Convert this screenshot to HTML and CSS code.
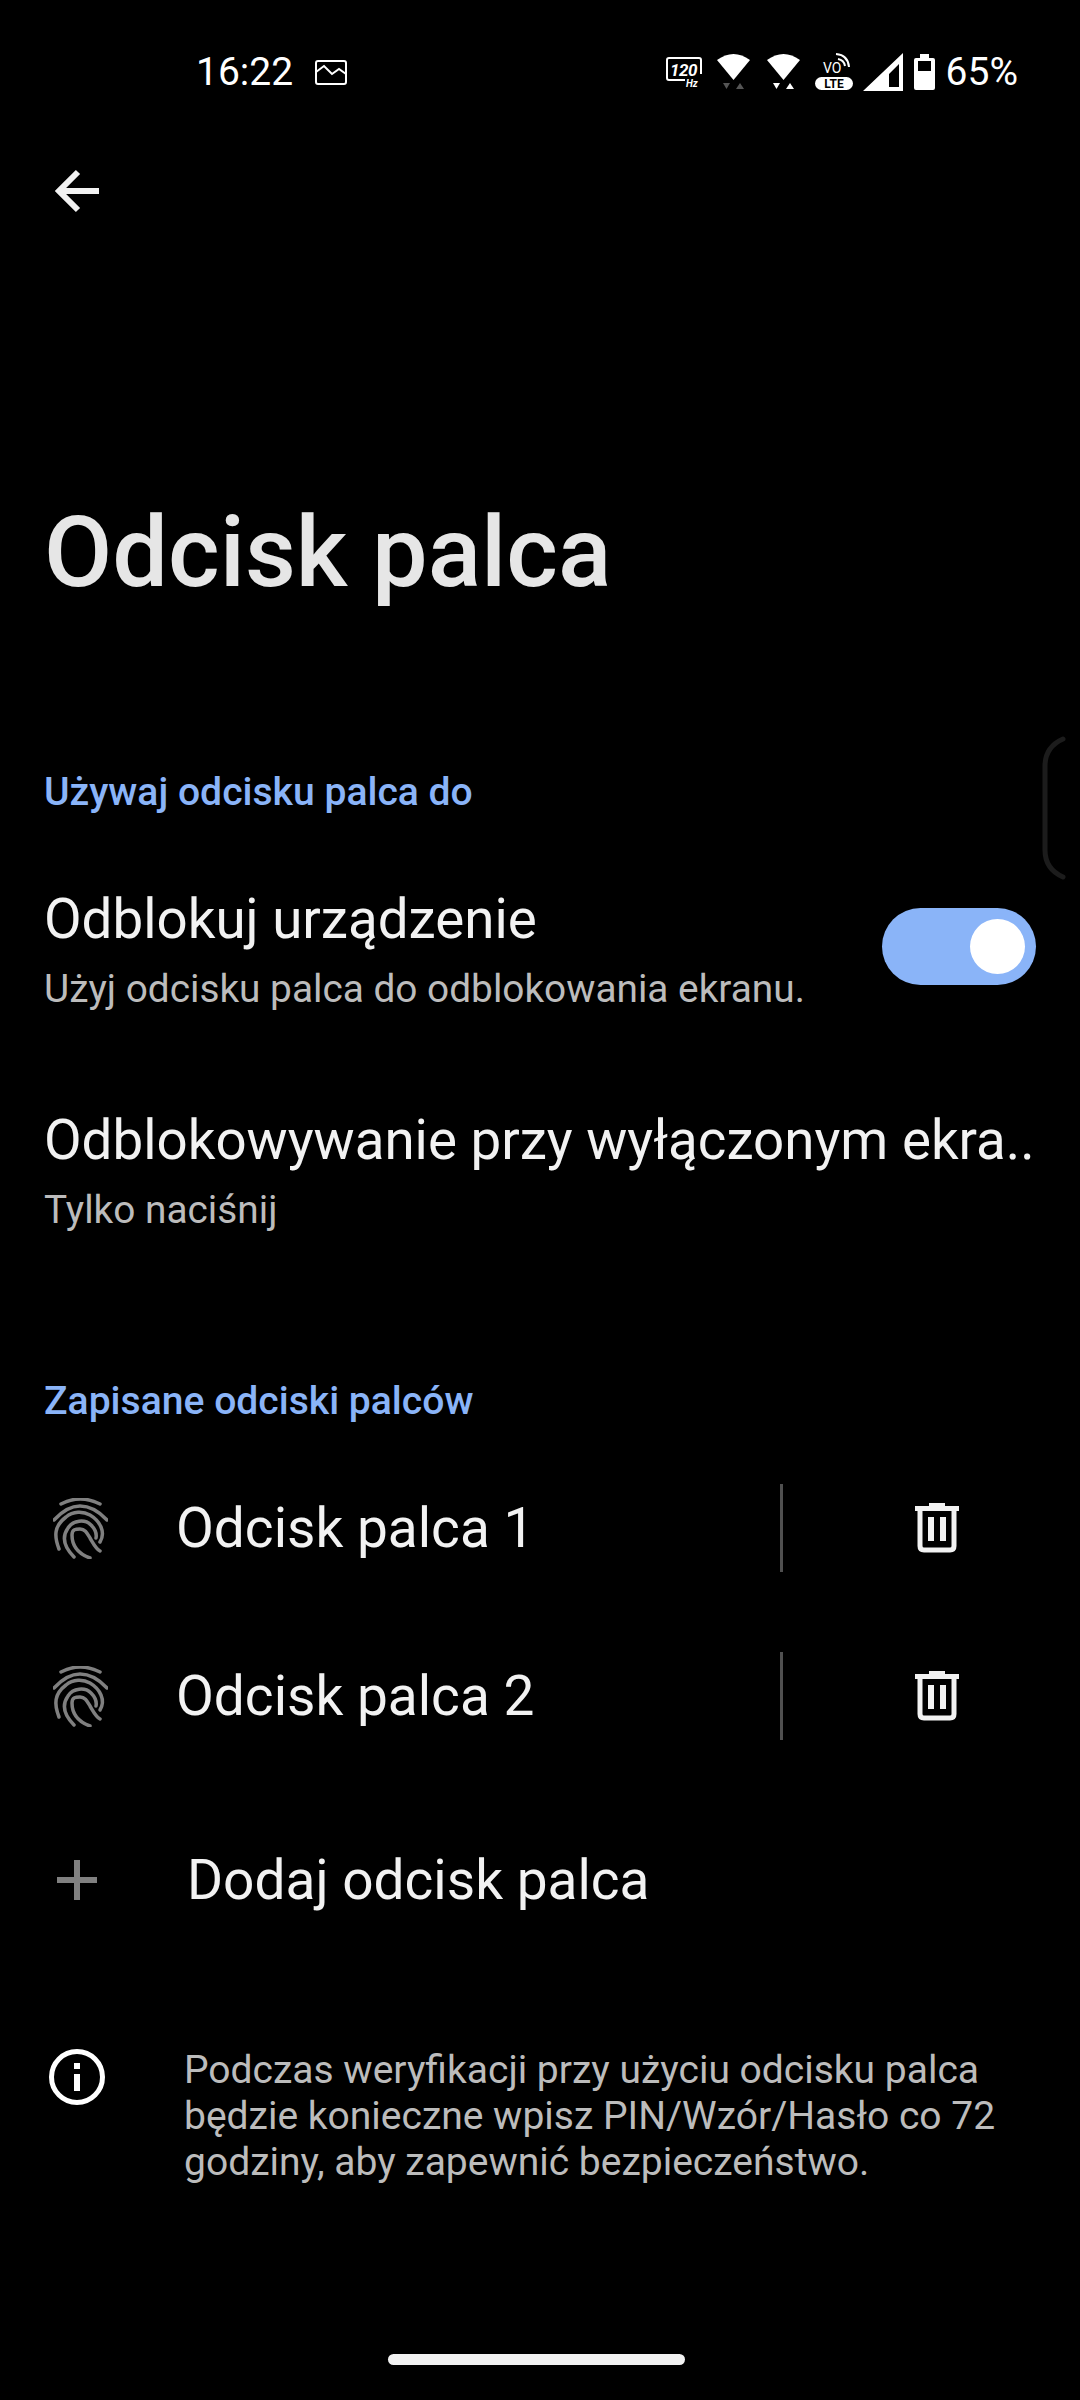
FILE: index.html
```html
<!DOCTYPE html>
<html lang="pl">
<head>
    <meta charset="UTF-8">
    <meta name="viewport" content="width=device-width, initial-scale=1.0">
    <title>Odcisk palca</title>
    <link rel="stylesheet" href="styles.css">
</head>
<body>
    <div class="screen">
        <div class="status-bar">
            <div class="status-left">
                <span class="clock">16:22</span>
                <svg class="ic-gallery" width="32" height="25" viewBox="0 0 32 25" fill="none" stroke="#fff" stroke-width="2">
                    <rect x="1" y="1" width="30" height="23" rx="2"/>
                    <path d="M1 12 L9 6 L17 14 L24 9 L31 14"/>
                </svg>
            </div>
            <div class="status-right">
                <svg class="ic-hz" width="36" height="34" viewBox="0 0 36 34" fill="none" stroke="#fff">
                    <path d="M35 17 V3 Q35 1 33 1 H3 Q1 1 1 3 V21 Q1 23 3 23 H19" stroke-width="2"/>
                    <text x="4" y="19" class="hz-num" fill="#fff" stroke="none">120</text>
                    <text x="20" y="30" class="hz-unit" fill="#fff" stroke="none">Hz</text>
                </svg>
                <svg class="ic-wifi" width="33" height="36" viewBox="0 0 33 36">
                    <path d="M0 6 Q16.500 -6 33 6 L16.500 26 Z" fill="#fff"/>
                    <path d="M6 29 H13 L9.500 35 Z" fill="#555"/>
                    <path d="M19 35 H27 L23 29 Z" fill="#555"/>
                </svg>
                <svg class="ic-wifi second" width="33" height="36" viewBox="0 0 33 36">
                    <path d="M0 6 Q16.500 -6 33 6 L16.500 26 Z" fill="#fff"/>
                    <path d="M6 29 H13 L9.500 35 Z" fill="#fff"/>
                    <path d="M19 35 H27 L23 29 Z" fill="#fff"/>
                </svg>
                <svg class="ic-volte" width="38" height="38" viewBox="0 0 38 38" fill="none" stroke="#fff">
                    <text x="8" y="20" class="vo-text" fill="#fff" stroke="none">VO</text>
                    <path d="M23 6 Q29 7 30 13 M21 1 Q33 2 34 14" stroke-width="2"/>
                    <rect x="0" y="24" width="38" height="13" rx="6.500" fill="#fff" stroke="none"/>
                    <text x="19" y="35" class="lte-text" fill="#000" stroke="none" text-anchor="middle">LTE</text>
                </svg>
                <svg class="ic-signal" width="40" height="38" viewBox="0 0 40 38">
                    <path d="M0 38 L40 0 V38 Z M26 34 H36 V11 L26 21 Z" fill="#fff" fill-rule="evenodd"/>
                </svg>
                <svg class="ic-battery" width="21" height="36" viewBox="0 0 21 36">
                    <path d="M6 0 H15 V4 H19 Q21 4 21 6 V34 Q21 36 19 36 H2 Q0 36 0 34 V6 Q0 4 2 4 H6 Z M4 7 V17 H17 V7 Z" fill="#fff" fill-rule="evenodd"/>
                </svg>
                <span class="battery">65%</span>
            </div>
        </div>

        <div class="toolbar">
            <svg width="44" height="44" viewBox="0 0 44 44" fill="none" stroke="#f2f2f2" stroke-width="6">
                <path d="M23 3 L4 22 L23 41 M4 22 H44"/>
            </svg>
        </div>

        <h1 class="page-title">Odcisk palca</h1>

        <h2 class="section-title first">Używaj odcisku palca do</h2>

        <div class="setting-row">
            <div class="setting-text">
                <div class="setting-name">Odblokuj urządzenie</div>
                <div class="setting-sub">Użyj odcisku palca do odblokowania ekranu.</div>
            </div>
            <div class="toggle"><div class="toggle-knob"></div></div>
        </div>

        <div class="setting-row second">
            <div class="setting-text">
                <div class="setting-name">Odblokowywanie przy wyłączonym ekra..</div>
                <div class="setting-sub">Tylko naciśnij</div>
            </div>
        </div>

        <h2 class="section-title">Zapisane odciski palców</h2>

        <div class="finger-row">
            <svg class="ic-finger" width="55" height="61" viewBox="0 0 55 61" fill="none" stroke="#808080" stroke-width="3.500" stroke-linecap="round">
                <path d="M8 6 Q27 -4 47 6"/>
                <path d="M1 22 Q14 8 27 8 Q41 8 54 22"/>
                <path d="M6 51 C1 38 1 28 13 19 C20 13 30 13 37 17 C47 23 53 34 47 44"/>
                <path d="M21 59 C12 50 8 40 15 30 C20 22 32 21 38 27 C42 31 44 35 43 40"/>
                <path d="M37 60 C26 56 19 48 19 37 C19 31 23 31 27 31 C32 31 34 35 37 40 C40 45 43 51 47 53"/>
            </svg>
            <span class="finger-name">Odcisk palca 1</span>
            <div class="divider"></div>
            <div class="trash-cell">
                <svg width="44" height="50" viewBox="0 0 44 50" fill="none">
                    <path d="M14 3 V0 H30 V3 H44 V8 H0 V3 Z" fill="#f2f2f2"/>
                    <path d="M5 8 V43 Q5 47 9 47 H35 Q39 47 39 43 V8" stroke="#f2f2f2" stroke-width="5"/>
                    <path d="M16 14 V38 M28 14 V38" stroke="#f2f2f2" stroke-width="6"/>
                </svg>
            </div>
        </div>

        <div class="finger-row">
            <svg class="ic-finger" width="55" height="61" viewBox="0 0 55 61" fill="none" stroke="#808080" stroke-width="3.500" stroke-linecap="round">
                <path d="M8 6 Q27 -4 47 6"/>
                <path d="M1 22 Q14 8 27 8 Q41 8 54 22"/>
                <path d="M6 51 C1 38 1 28 13 19 C20 13 30 13 37 17 C47 23 53 34 47 44"/>
                <path d="M21 59 C12 50 8 40 15 30 C20 22 32 21 38 27 C42 31 44 35 43 40"/>
                <path d="M37 60 C26 56 19 48 19 37 C19 31 23 31 27 31 C32 31 34 35 37 40 C40 45 43 51 47 53"/>
            </svg>
            <span class="finger-name">Odcisk palca 2</span>
            <div class="divider"></div>
            <div class="trash-cell">
                <svg width="44" height="50" viewBox="0 0 44 50" fill="none">
                    <path d="M14 3 V0 H30 V3 H44 V8 H0 V3 Z" fill="#f2f2f2"/>
                    <path d="M5 8 V43 Q5 47 9 47 H35 Q39 47 39 43 V8" stroke="#f2f2f2" stroke-width="5"/>
                    <path d="M16 14 V38 M28 14 V38" stroke="#f2f2f2" stroke-width="6"/>
                </svg>
            </div>
        </div>

        <div class="add-row">
            <svg width="40" height="40" viewBox="0 0 40 40" stroke="#808080" stroke-width="6">
                <path d="M20 0 V40 M0 20 H40"/>
            </svg>
            <span class="add-label">Dodaj odcisk palca</span>
        </div>

        <div class="info-row">
            <svg class="ic-info" width="56" height="56" viewBox="0 0 56 56" fill="none" stroke="#fff">
                <circle cx="28" cy="28" r="25.500" stroke-width="5"/>
                <path d="M28 14 V20 M28 25 V42" stroke-width="6"/>
            </svg>
            <p class="info-text">Podczas weryfikacji przy użyciu odcisku palca będzie konieczne wpisz PIN/Wzór/Hasło co 72 godziny, aby zapewnić bezpieczeństwo.</p>
        </div>

        <svg class="edge-handle" width="24" height="144" viewBox="0 0 24 144" fill="none" stroke="#1c1c1c" stroke-width="5" stroke-linecap="round">
            <path d="M21 3 Q3 11 3 30 V114 Q3 133 21 141"/>
        </svg>
        <div class="home-bar"></div>
    </div>
</body>
</html>
```

FILE: styles.css
```css
body {
    margin: 0;
    padding: 0;
    background-color: #000;
    font-family: Roboto, "Noto Sans", sans-serif;
    color: #f2f2f2;
}
.screen {
    position: relative;
    width: 1080px;
    height: 2400px;
    overflow: hidden;
    background: #000;
}
.status-bar {
    display: flex;
    justify-content: space-between;
    align-items: center;
    height: 144px;
    padding: 0 62px 0 196px;
    box-sizing: border-box;
}
.status-left {
    display: flex;
    align-items: center;
    gap: 22px;
}
.status-right {
    display: flex;
    align-items: center;
}
.clock {
    font-size: 39px;
    color: #fff;
}
.battery {
    margin-left: 11px;
    font-size: 39px;
    color: #fff;
}
.ic-hz {
    margin-top: 4px;
}
.ic-wifi {
    margin-left: 15px;
}
.ic-wifi.second {
    margin-left: 17px;
}
.ic-volte {
    margin-left: 15px;
}
.ic-signal {
    margin-left: 10px;
}
.ic-battery {
    margin-left: 11px;
}
.hz-num {
    font-family: Roboto, sans-serif;
    font-size: 17px;
    font-style: italic;
    font-weight: 700;
    letter-spacing: -0.5px;
}
.hz-unit {
    font-family: Roboto, sans-serif;
    font-size: 10px;
    font-style: italic;
    font-weight: 700;
}
.vo-text {
    font-family: Roboto, sans-serif;
    font-size: 14px;
}
.lte-text {
    font-family: Roboto, sans-serif;
    font-size: 12px;
    font-weight: 700;
}
.toolbar {
    height: 44px;
    padding: 25px 0 0 55px;
}
.page-title {
    margin: 0;
    padding: 283px 0 0 44px;
    font-size: 99px;
    font-weight: 500;
    line-height: 112px;
    color: #e6e6e6;
}
.section-title {
    margin: 0;
    padding: 147px 0 0 44px;
    font-size: 39.100px;
    font-weight: 500;
    line-height: 44px;
    color: #8ab4f8;
}
.section-title.first {
    padding-top: 162px;
}
.setting-row {
    display: flex;
    align-items: center;
    justify-content: space-between;
    padding: 75px 44px 0 44px;
}
.setting-row.second {
    padding-top: 99px;
}
.setting-name {
    font-size: 54.700px;
    line-height: 60px;
    white-space: nowrap;
}
.setting-sub {
    margin-top: 18px;
    font-size: 38.800px;
    line-height: 44px;
    color: #bcbcbc;
}
.toggle {
    display: flex;
    align-items: center;
    justify-content: flex-end;
    box-sizing: border-box;
    width: 154px;
    height: 77px;
    margin-bottom: 8px;
    padding-right: 11px;
    border-radius: 39px;
    background: #8ab4f8;
    flex-shrink: 0;
}
.toggle-knob {
    width: 55px;
    height: 55px;
    border-radius: 50%;
    background: #fff;
}
.finger-row {
    display: flex;
    align-items: center;
    height: 88px;
    padding-left: 53px;
    margin-top: 80px;
}
.section-title + .finger-row {
    margin-top: 61px;
}
.ic-finger {
    flex-shrink: 0;
}
.finger-name {
    width: 604px;
    margin-left: 68px;
    font-size: 55px;
}
.divider {
    width: 3px;
    height: 88px;
    background: #505050;
}
.trash-cell {
    display: flex;
    margin-left: 132px;
}
.add-row {
    display: flex;
    align-items: center;
    padding: 110px 0 0 57px;
}
.add-label {
    margin-left: 90px;
    font-size: 55px;
    line-height: 60px;
}
.info-row {
    display: flex;
    align-items: flex-start;
    padding: 139px 44px 0 49px;
}
.ic-info {
    flex-shrink: 0;
}
.info-text {
    margin: -2px 0 0 79px;
    font-size: 39px;
    line-height: 46px;
    color: #bcbcbc;
}
.edge-handle {
    position: absolute;
    left: 1042px;
    top: 736px;
}
.home-bar {
    position: absolute;
    left: 388px;
    top: 2354px;
    width: 297px;
    height: 11px;
    border-radius: 6px;
    background: #f2f2f2;
}
```
